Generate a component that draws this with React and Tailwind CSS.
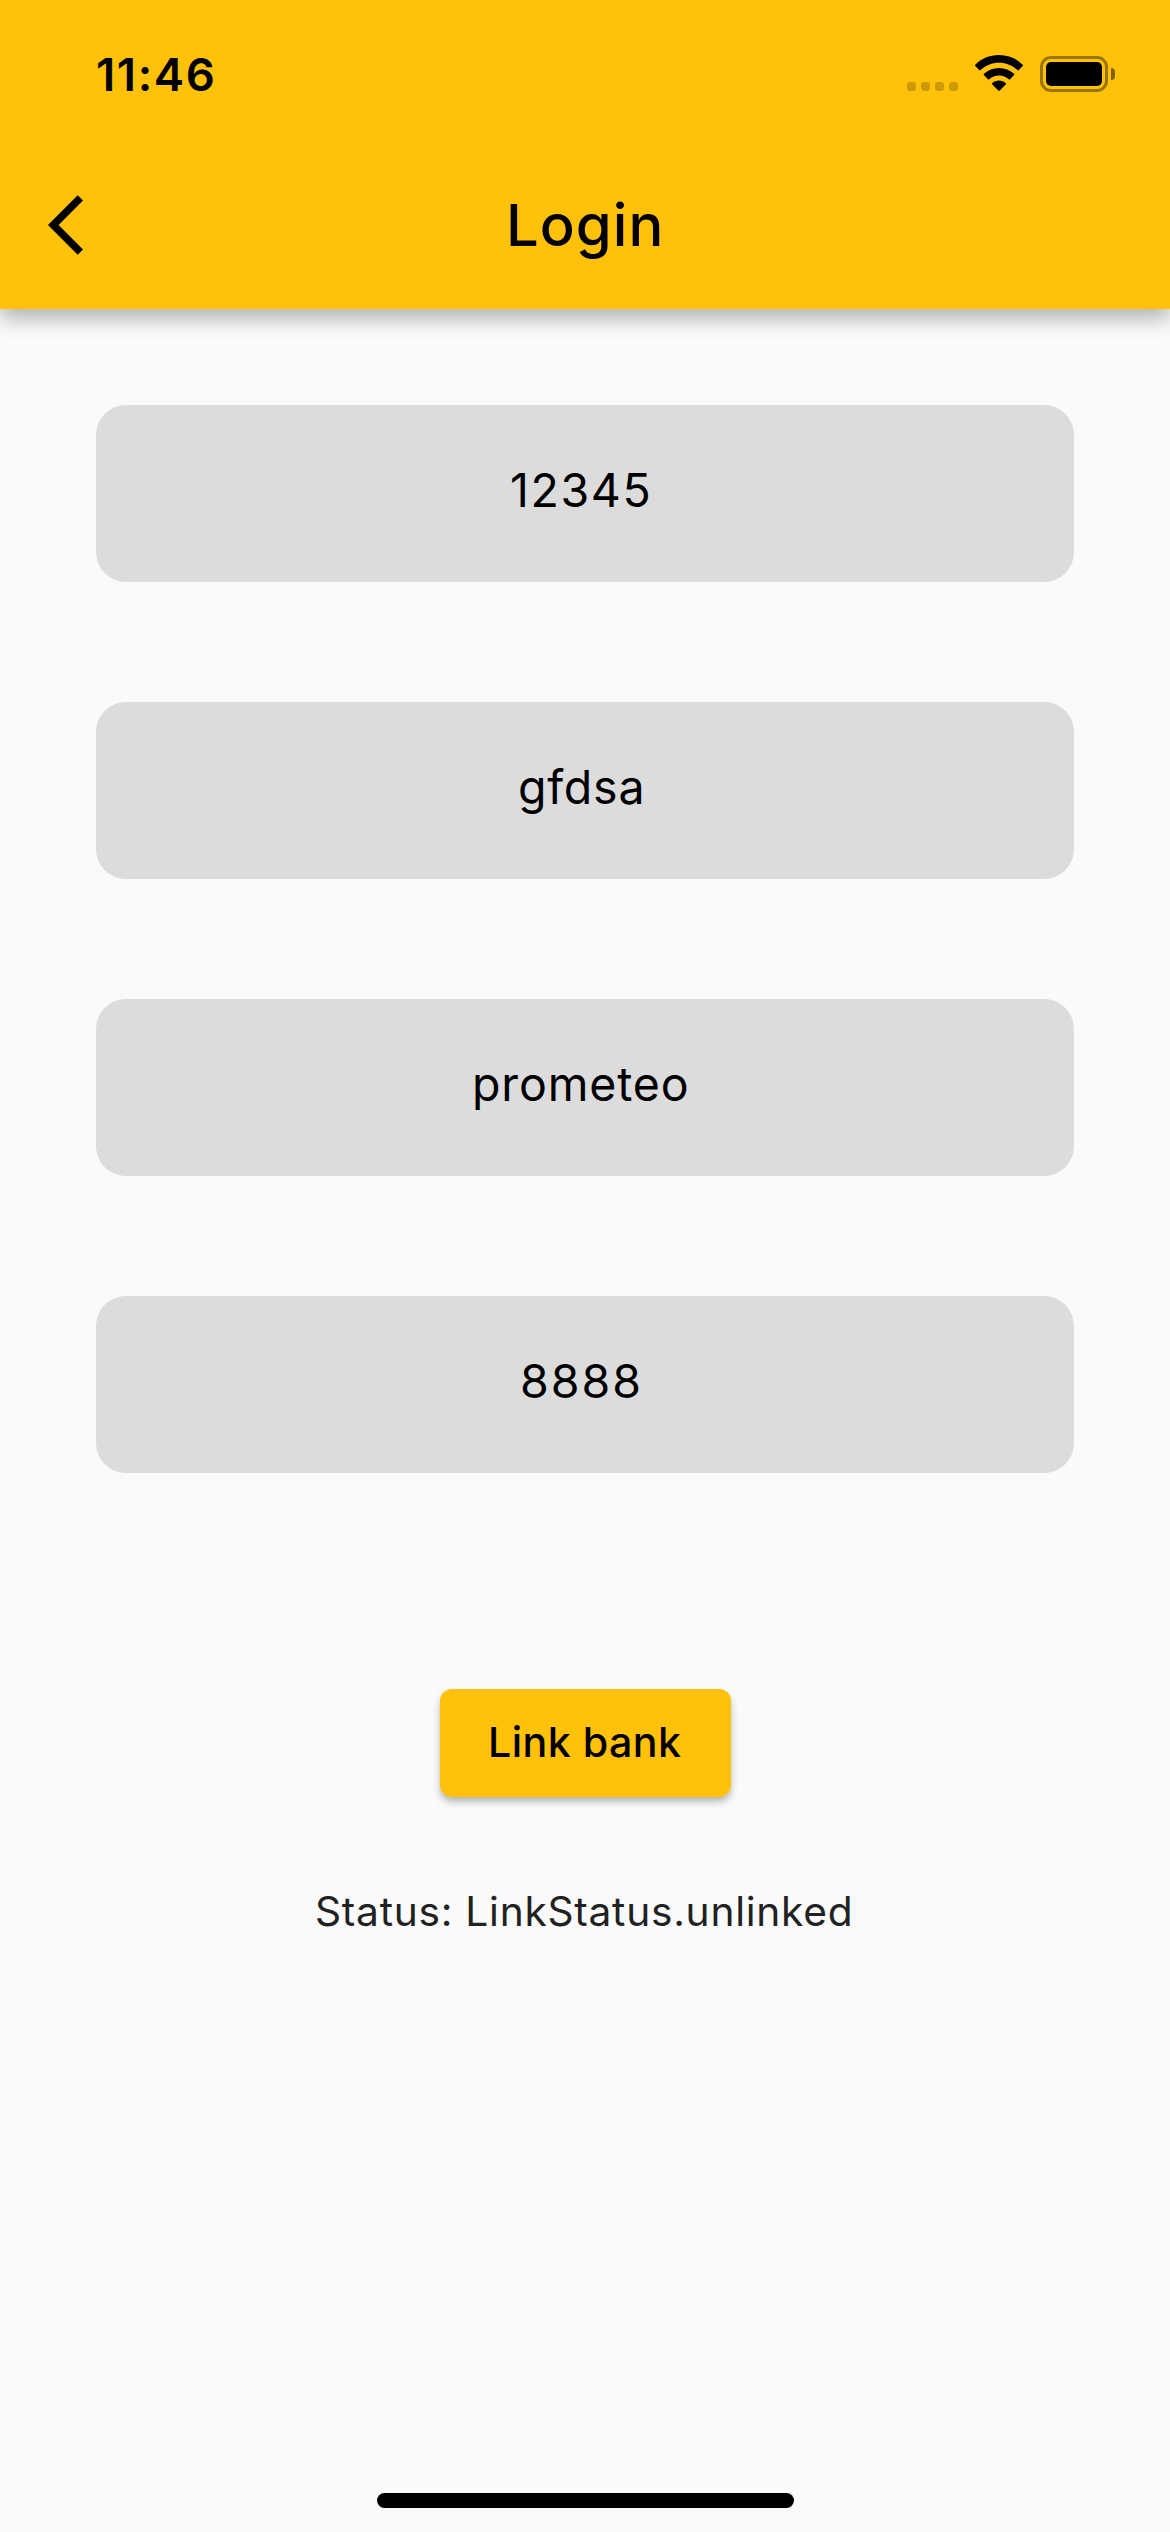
import React from "react";

const fields = [
  { text: "12345", style: "pl-[414px] tracking-[1.6px]" },
  { text: "gfdsa", style: "pl-[422px] tracking-[0.75px]" },
  { text: "prometeo", style: "pl-[376px] tracking-[0.85px]" },
  { text: "8888", style: "pl-[424px] tracking-[2px]" },
];

function StatusBar() {
  return (
    <div className="flex h-[141px] items-start pl-[96px]">
      <span className="mt-[47px] text-[45.5px] font-semibold leading-[55px] tracking-[1.6px]">11:46</span>
      <div className="ml-auto mt-[82px] flex gap-[5px]">
        {[0, 1, 2, 3].map((i) => (
          <span key={i} className="h-[9px] w-[9px] rounded-[3px] bg-black/20" />
        ))}
      </div>
      <svg className="ml-[17px] mt-[55px]" width="48" height="36" viewBox="0 0 48 36">
        <path d="M24 0C33.4 0 41.8 3.6 47.7 9.7Q48.3 10.4 47.7 11L43.8 15.1Q43.2 15.7 42.5 15.1C37.5 10.4 31 7.8 24 7.8S10.500 10.400 5.500 15.100Q4.800 15.700 4.200 15.100L.3 11Q-.3 10.400 .3 9.700C6.200 3.600 14.600 0 24 0Z" />
        <path d="M24 12.900C29.900 12.900 35.100 15.100 39.100 18.800Q39.700 19.500 39.100 20.100L35.100 24.200Q34.500 24.800 33.800 24.200C31.200 21.900 27.800 20.500 24 20.500S16.800 21.900 14.200 24.200Q13.500 24.800 12.900 24.200L8.900 20.100Q8.300 19.500 8.900 18.800C12.900 15.100 18.100 12.900 24 12.900Z" />
        <path d="M24 25.500C26.600 25.500 28.900 26.500 30.700 28.100Q31.400 28.800 30.700 29.400L24.700 35.600Q24 36.200 23.300 35.600L17.300 29.400Q16.600 28.800 17.300 28.100C19.100 26.500 21.400 25.500 24 25.500Z" />
      </svg>
      <div className="ml-[17px] mt-[56px] h-[36px] w-[68px] rounded-[11px] border-[3px] border-black/40 p-[3px]">
        <div className="h-full rounded-[5px] bg-black" />
      </div>
      <div className="ml-[3px] mr-[55px] mt-[68px] h-[12px] w-[4px] rounded-r-full bg-black/50" />
    </div>
  );
}

function Header() {
  return (
    <header className="relative h-[309px] bg-[#ffc10a] shadow-[0_9px_20px_rgba(0,0,0,0.3)]">
      <StatusBar />
      <div className="flex h-[168px] items-center pl-[48px]">
        <svg width="72" height="72" viewBox="0 0 24 24">
          <path d="M11.67 3.87L9.900 2.100 0 12l9.900 9.900 1.770-1.770L3.540 12z" />
        </svg>
        <h1 className="ml-[386px] text-[58px] font-medium leading-[70px] tracking-[1px]">Login</h1>
      </div>
    </header>
  );
}

export default function App() {
  return (
    <div className="flex h-[2532px] w-[1170px] flex-col overflow-hidden bg-[#fafafa] font-['Inter',sans-serif] text-black">
      <Header />
      <main className="flex flex-1 flex-col px-[96px] pt-[96px]">
        <div className="flex flex-col gap-[120px]">
          {fields.map((f) => (
            <div key={f.text} className="h-[177px] rounded-[30px] bg-[#dcdcdc] pt-[57px]">
              <div className={`text-[46.5px] leading-[56px] ${f.style}`}>{f.text}</div>
            </div>
          ))}
        </div>
        <button className="mx-auto mt-[216px] block h-[108px] w-[291px] rounded-[12px] bg-[#ffc10a] pl-[48.5px] pb-[2px] text-left text-[41.2px] font-medium leading-[50px] tracking-[0.45px] shadow-[0_5px_9px_-1px_rgba(0,0,0,0.32)]">
          Link bank
        </button>
        <p className="mt-[90px] pl-[219px] text-[40.7px] leading-[49px] tracking-[0.73px] text-[#212121]">Status: LinkStatus.unlinked</p>
      </main>
      <div className="mx-auto mb-[24px] h-[15px] w-[417px] rounded-full bg-black" />
    </div>
  );
}
